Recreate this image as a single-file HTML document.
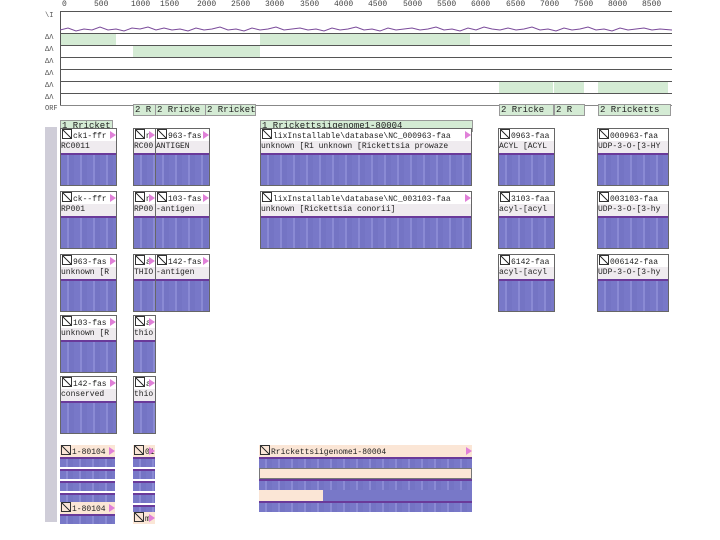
<!DOCTYPE html>
<html><head><meta charset="utf-8"><style>
body{margin:0;width:720px;height:540px;background:#fff;position:relative;overflow:hidden;font-family:"Liberation Mono",monospace;font-size:8px;color:#222}
.a{position:absolute}
.hl{position:absolute;left:60px;width:612px;height:1px;background:#555}
.g{position:absolute;background:#d4ebd4;height:11px}
.lab{position:absolute;left:45px;font-size:7px;color:#555}
.tag{position:absolute;top:104px;height:10px;background:#d4ebd4;border:1px solid #999;font-size:9px;line-height:10px;white-space:nowrap;overflow:hidden;padding-left:1px}
.p{position:absolute;border:1px solid #666;background:#fff}
.p .h{height:12px;line-height:12px;white-space:nowrap;overflow:hidden;font-size:8px;position:relative}
.p .h i{display:inline-block;width:8px;height:8px;border:1px solid #333;vertical-align:-1px;margin:0 1px;background:linear-gradient(45deg,transparent 45%,#333 45%,#333 55%,transparent 55%)}
.p .h b{position:absolute;right:0;top:2px;width:0;height:0;border-left:6px solid #e080d8;border-top:4px solid transparent;border-bottom:4px solid transparent}
.p .l{height:12px;line-height:12px;background:#efebef;white-space:nowrap;overflow:hidden;font-size:8px}
.p .d{background:repeating-linear-gradient(90deg,#7878c8 0 6px,#8a8ad4 6px 8px,#7474c4 8px 13px);border-top:2px solid #6a3a9a}
.pe .h{background:#fbe6d6}
</style></head><body>
<div class="a" style="left:60px;top:0;width:612px;height:10px;font-size:8px;color:#444">
<span class="a" style="left:2px">0</span><span class="a" style="left:34px">500</span><span class="a" style="left:71px">1000</span><span class="a" style="left:100px">1500</span><span class="a" style="left:137px">2000</span><span class="a" style="left:171px">2500</span><span class="a" style="left:205px">3000</span><span class="a" style="left:240px">3500</span><span class="a" style="left:274px">4000</span><span class="a" style="left:308px">4500</span><span class="a" style="left:343px">5000</span><span class="a" style="left:377px">5500</span><span class="a" style="left:411px">6000</span><span class="a" style="left:446px">6500</span><span class="a" style="left:480px">7000</span><span class="a" style="left:514px">7500</span><span class="a" style="left:548px">8000</span><span class="a" style="left:582px">8500</span></div>
<div class="hl" style="top:11px"></div>
<div class="a" style="left:60px;top:12px;width:1px;height:94px;background:#555"></div>
<svg class="a" style="left:60px;top:24px" width="612" height="10"><polyline fill="none" stroke="#7a4a9a" stroke-width="1" points="0,6 8,4 16,7 24,5 32,6 40,3 48,6 56,5 64,7 72,4 80,5 88,3 96,6 104,4 112,6 120,5 128,7 136,4 144,6 152,5 160,3 168,6 176,5 184,7 192,4 200,6 208,5 216,3 224,6 232,5 240,4 248,6 256,5 264,7 272,4 280,6 288,5 296,3 304,6 312,5 320,7 328,4 336,6 344,5 352,4 360,6 368,5 376,3 384,6 392,5 400,7 408,4 416,6 424,3 432,5 440,6 448,4 456,6 464,5 472,3 480,6 488,5 496,7 504,4 512,6 520,5 528,3 536,6 544,5 552,7 560,4 568,6 576,5 584,4 592,6 600,5 612,6"/></svg>
<div class="hl" style="top:33px"></div><div class="hl" style="top:45px"></div><div class="hl" style="top:57px"></div><div class="hl" style="top:69px"></div><div class="hl" style="top:81px"></div><div class="hl" style="top:93px"></div><div class="hl" style="top:105px;background:#888"></div>
<div class="g" style="left:61px;top:34px;width:55px"></div><div class="g" style="left:260px;top:34px;width:210px"></div>
<div class="g" style="left:133px;top:46px;width:127px"></div>
<div class="g" style="left:499px;top:82px;width:54px"></div><div class="g" style="left:554px;top:82px;width:30px"></div><div class="g" style="left:598px;top:82px;width:70px"></div>
<div class="lab" style="top:12px">\I</div><div class="lab" style="top:34px">ΔΛ</div><div class="lab" style="top:46px">ΔΛ</div><div class="lab" style="top:58px">ΔΛ</div><div class="lab" style="top:70px">ΔΛ</div><div class="lab" style="top:82px">ΔΛ</div><div class="lab" style="top:94px">ΔΛ</div><div class="lab" style="top:105px">ORF</div>
<div class="a" style="left:45px;top:127px;width:12px;height:395px;background:#cfcdd8"></div>
<div class="tag" style="left:133px;width:20px">2 R</div><div class="tag" style="left:155px;width:48px">2 Rricke</div><div class="tag" style="left:205px;width:48px">2 Rricket</div>
<div class="tag" style="left:499px;width:52px">2 Rricke</div><div class="tag" style="left:554px;width:28px">2 R</div><div class="tag" style="left:598px;width:70px">2 Rricketts</div>
<div class="tag" style="left:60px;top:120px;width:50px">1 Rricket</div>
<div class="tag" style="left:260px;top:120px;width:210px">1 Rrickettsiigenome1-80004</div>
<!-- col1 -->
<div class="p" style="left:60px;top:128px;width:55px"><div class="h"><i></i>ck1-ffr<b></b></div><div class="l">RC0011</div><div class="d" style="height:30px"></div></div>
<div class="p" style="left:60px;top:191px;width:55px"><div class="h"><i></i>ck--ffr<b></b></div><div class="l">RP001</div><div class="d" style="height:30px"></div></div>
<div class="p" style="left:60px;top:254px;width:55px"><div class="h"><i></i>963-fas<b></b></div><div class="l">unknown [R</div><div class="d" style="height:30px"></div></div>
<div class="p" style="left:60px;top:315px;width:55px"><div class="h"><i></i>103-fas<b></b></div><div class="l">unknown [R</div><div class="d" style="height:30px"></div></div>
<div class="p" style="left:60px;top:376px;width:55px"><div class="h"><i></i>142-fas<b></b></div><div class="l">conserved</div><div class="d" style="height:30px"></div></div>
<!-- col2 -->
<div class="p" style="left:133px;top:128px;width:21px"><div class="h"><i></i>n<b></b></div><div class="l">RC00</div><div class="d" style="height:30px"></div></div>
<div class="p" style="left:133px;top:191px;width:21px"><div class="h"><i></i>n<b></b></div><div class="l">RP00</div><div class="d" style="height:30px"></div></div>
<div class="p" style="left:133px;top:254px;width:21px"><div class="h"><i></i>a<b></b></div><div class="l">THIO</div><div class="d" style="height:30px"></div></div>
<div class="p" style="left:133px;top:315px;width:21px"><div class="h"><i></i>a<b></b></div><div class="l">thio</div><div class="d" style="height:30px"></div></div>
<div class="p" style="left:133px;top:376px;width:21px"><div class="h"><i></i>a<b></b></div><div class="l">thio</div><div class="d" style="height:30px"></div></div>
<!-- col3 -->
<div class="p" style="left:155px;top:128px;width:53px"><div class="h"><i></i>963-fas<b></b></div><div class="l">ANTIGEN</div><div class="d" style="height:30px"></div></div>
<div class="p" style="left:155px;top:191px;width:53px"><div class="h"><i></i>103-fas<b></b></div><div class="l">-antigen</div><div class="d" style="height:30px"></div></div>
<div class="p" style="left:155px;top:254px;width:53px"><div class="h"><i></i>142-fas<b></b></div><div class="l">-antigen</div><div class="d" style="height:30px"></div></div>
<!-- col4 -->
<div class="p" style="left:260px;top:128px;width:210px"><div class="h"><i></i>lixInstallable\database\NC_000963-faa<b></b></div><div class="l">unknown [R1 unknown [Rickettsia prowaze</div><div class="d" style="height:30px"></div></div>
<div class="p" style="left:260px;top:191px;width:210px"><div class="h"><i></i>lixInstallable\database\NC_003103-faa<b></b></div><div class="l">unknown [Rickettsia conorii]</div><div class="d" style="height:30px"></div></div>
<!-- col5 -->
<div class="p" style="left:498px;top:128px;width:55px"><div class="h"><i></i>0963-faa</div><div class="l">ACYL [ACYL</div><div class="d" style="height:30px"></div></div>
<div class="p" style="left:498px;top:191px;width:55px"><div class="h"><i></i>3103-faa</div><div class="l">acyl-[acyl</div><div class="d" style="height:30px"></div></div>
<div class="p" style="left:498px;top:254px;width:55px"><div class="h"><i></i>6142-faa</div><div class="l">acyl-[acyl</div><div class="d" style="height:30px"></div></div>
<!-- col6 -->
<div class="p" style="left:597px;top:128px;width:70px"><div class="h"><i></i>000963-faa</div><div class="l">UDP-3-O-[3-HY</div><div class="d" style="height:30px"></div></div>
<div class="p" style="left:597px;top:191px;width:70px"><div class="h"><i></i>003103-faa</div><div class="l">UDP-3-O-[3-hy</div><div class="d" style="height:30px"></div></div>
<div class="p" style="left:597px;top:254px;width:70px"><div class="h"><i></i>006142-faa</div><div class="l">UDP-3-O-[3-hy</div><div class="d" style="height:30px"></div></div>
<!-- bottom -->
<div class="p pe" style="left:60px;top:445px;width:55px;border:none"><div class="h"><i></i>1-80104<b></b></div><div class="d" style="height:8px"></div><div class="d" style="height:8px;margin-top:2px"></div><div class="d" style="height:8px;margin-top:2px"></div><div class="d" style="height:8px;margin-top:2px"></div></div>
<div class="p pe" style="left:60px;top:502px;width:55px;border:none"><div class="h"><i></i>1-80104<b></b></div><div class="d" style="height:8px"></div></div>
<div class="p pe" style="left:133px;top:445px;width:22px;border:none"><div class="h"><i></i>01<b></b></div><div class="d" style="height:8px"></div><div class="d" style="height:8px;margin-top:2px"></div><div class="d" style="height:8px;margin-top:2px"></div><div class="d" style="height:8px;margin-top:2px"></div><div class="d" style="height:8px;margin-top:2px"></div></div>
<div class="p pe" style="left:133px;top:512px;width:22px;border:none"><div class="h"><i></i>m<b></b></div></div>
<div class="p pe" style="left:259px;top:445px;width:213px;border:none"><div class="h"><i></i>Rrickettsiigenome1-80004<b></b></div>
<div class="d" style="height:9px"></div>
<div style="height:9px;background:#fbe6d6;border:1px solid #777"></div>
<div class="d" style="height:9px"></div>
<div style="height:11px;background:linear-gradient(90deg,#fbe6d6 0 30%,#7878c8 30%)"></div>
<div class="d" style="height:9px"></div></div>
</body></html>
